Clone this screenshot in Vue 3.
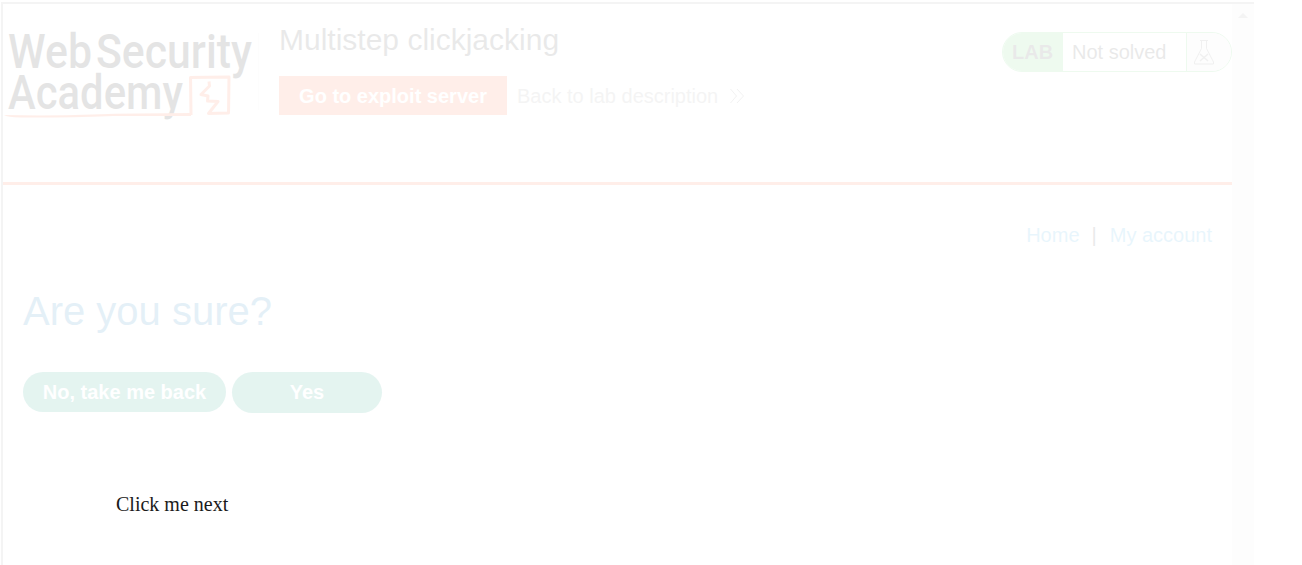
<script setup>
</script>

<template>
  <main class="page">
    <div class="decoy">Click me next</div>
    <section class="frame">
      <div class="content">
        <header class="header">
          <svg class="logo" width="256" height="100" viewBox="0 0 256 100">
            <g class="wordmark">
              <text x="5" y="48" textLength="84" lengthAdjust="spacingAndGlyphs">Web</text>
              <text x="93" y="48" textLength="156" lengthAdjust="spacingAndGlyphs">Security</text>
              <text x="5" y="89" textLength="175" lengthAdjust="spacingAndGlyphs">Academy</text>
            </g>
            <path class="tail" d="M1 95Q45 96 90 94.500T188 93V96H110Q55 98 18 97.500Q4 97 1 95Z" />
            <path class="line" d="M188 95L187.500 57.500L226 57L225.500 93L205.500 93.500L215 81.500L204.500 81L205 76L198 74.500L206.500 66L206 61.500" />
            <path class="rule" d="M255.500 13V90" />
          </svg>
          <div class="intro">
            <h2>Multistep clickjacking</h2>
            <div class="actions">
              <a class="exploit">Go to exploit server</a>
              <a class="back">Back to lab description
                <svg width="14" height="16" viewBox="0 0 14 16"><path d="M0.500 1l6 7-6 7M7 1l6.500 7-6.500 7" /></svg>
              </a>
            </div>
          </div>
          <div class="status">
            <strong>LAB</strong>
            <span>Not solved</span>
            <div class="flask">
              <svg width="22" height="27" viewBox="0 0 22 27"><path d="M6 1.500h8M7.500 1.500v8L.5 23v2h19v-2L12.500 9.500v-8" /><path class="cross" d="M6 15l8 7M14 15l-8 7" /></svg>
            </div>
          </div>
        </header>
        <nav><a>Home</a><i>|</i><a>My account</a></nav>
        <h1>Are you sure?</h1>
        <div class="buttons">
          <button class="no">No, take me back</button>
          <button class="yes">Yes</button>
        </div>
      </div>
      <div class="scrollbar"><b></b></div>
    </section>
  </main>
</template>

<style>
body { margin: 0; background: #fff; }
</style>

<style scoped>
.page { position: relative; width: 1302px; height: 565px; overflow: hidden; background: #fff; }
.decoy { position: absolute; left: 116px; top: 493px; font: 20px/23px "Liberation Serif", serif; color: #000; }
.frame {
  box-sizing: border-box; width: 1253px; height: 700px; margin: 2px 0 0 1px;
  border: 2px solid #999; border-right: 0; opacity: .1; display: flex; background: #fff;
  font: 20px/24px "Liberation Sans", Arial, sans-serif; color: #333;
}
.content { width: 1229px; }
.header { box-sizing: border-box; height: 181px; border-bottom: 3px solid #ff6633; display: flex; align-items: flex-start; }
.logo { margin-top: 16px; flex: none; overflow: visible; }
.wordmark { font: 500 48px Roboto, sans-serif; fill: #000; }
.line { fill: none; stroke: #ff6633; stroke-width: 3; stroke-linejoin: round; }
.tail { fill: #ff6633; }
.rule { stroke: #eee; }
.intro { margin: 18px 0 0 20px; }
h2 { margin: 0; font-size: 30px; font-weight: 400; line-height: 36px; }
.actions { display: flex; margin-top: 18px; align-items: center; }
.exploit { box-sizing: border-box; width: 228px; height: 39px; line-height: 40px; background: #ff6633; color: #fff; font-weight: 700; text-align: center; }
.back { display: flex; align-items: center; margin-left: 10px; color: #999; }
.back svg { margin-left: 12px; fill: none; stroke: #888; stroke-width: 1; }
.status { box-sizing: border-box; width: 230px; height: 40px; margin: 28px 0 0 auto; border: 1px solid #60d66b; border-radius: 20px; overflow: hidden; display: flex; line-height: 38px; }
.status strong { box-sizing: border-box; width: 60px; padding-left: 9px; background: #60d66b; }
.status span { width: 123px; box-sizing: border-box; padding-left: 9px; }
.flask { flex: 1; border-left: 1px solid #60d66b; background: #eee; }
.flask svg { display: block; margin: 6px 0 0 7px; fill: none; stroke: #777; stroke-width: 1; }
.flask .cross { stroke-width: 1.5; }
nav { display: flex; justify-content: flex-end; margin: 38px 20px 0 0; color: #29a9e8; }
nav i { font-style: normal; color: #333; margin: 0 13px 0 12px; }
h1 { margin: 37px 0 0 20px; font-size: 40px; line-height: 54px; font-weight: 400; color: #0071bc; }
.buttons { display: flex; align-items: flex-start; gap: 6px; margin: 34px 0 0 20px; }
button { border: 0; padding: 0; height: 40px; border-radius: 21px; background: #00997a; color: #fff; font: 700 20px/40px "Liberation Sans", Arial, sans-serif; }
.no { width: 203px; }
.yes { width: 150px; height: 41px; line-height: 39px; }
.scrollbar { width: 22px; background: #f1f1f1; display: flex; justify-content: center; }
.scrollbar b { width: 0; height: 0; margin-top: 9px; border: 5px solid transparent; border-top: 0; border-bottom-color: #999; }
</style>
